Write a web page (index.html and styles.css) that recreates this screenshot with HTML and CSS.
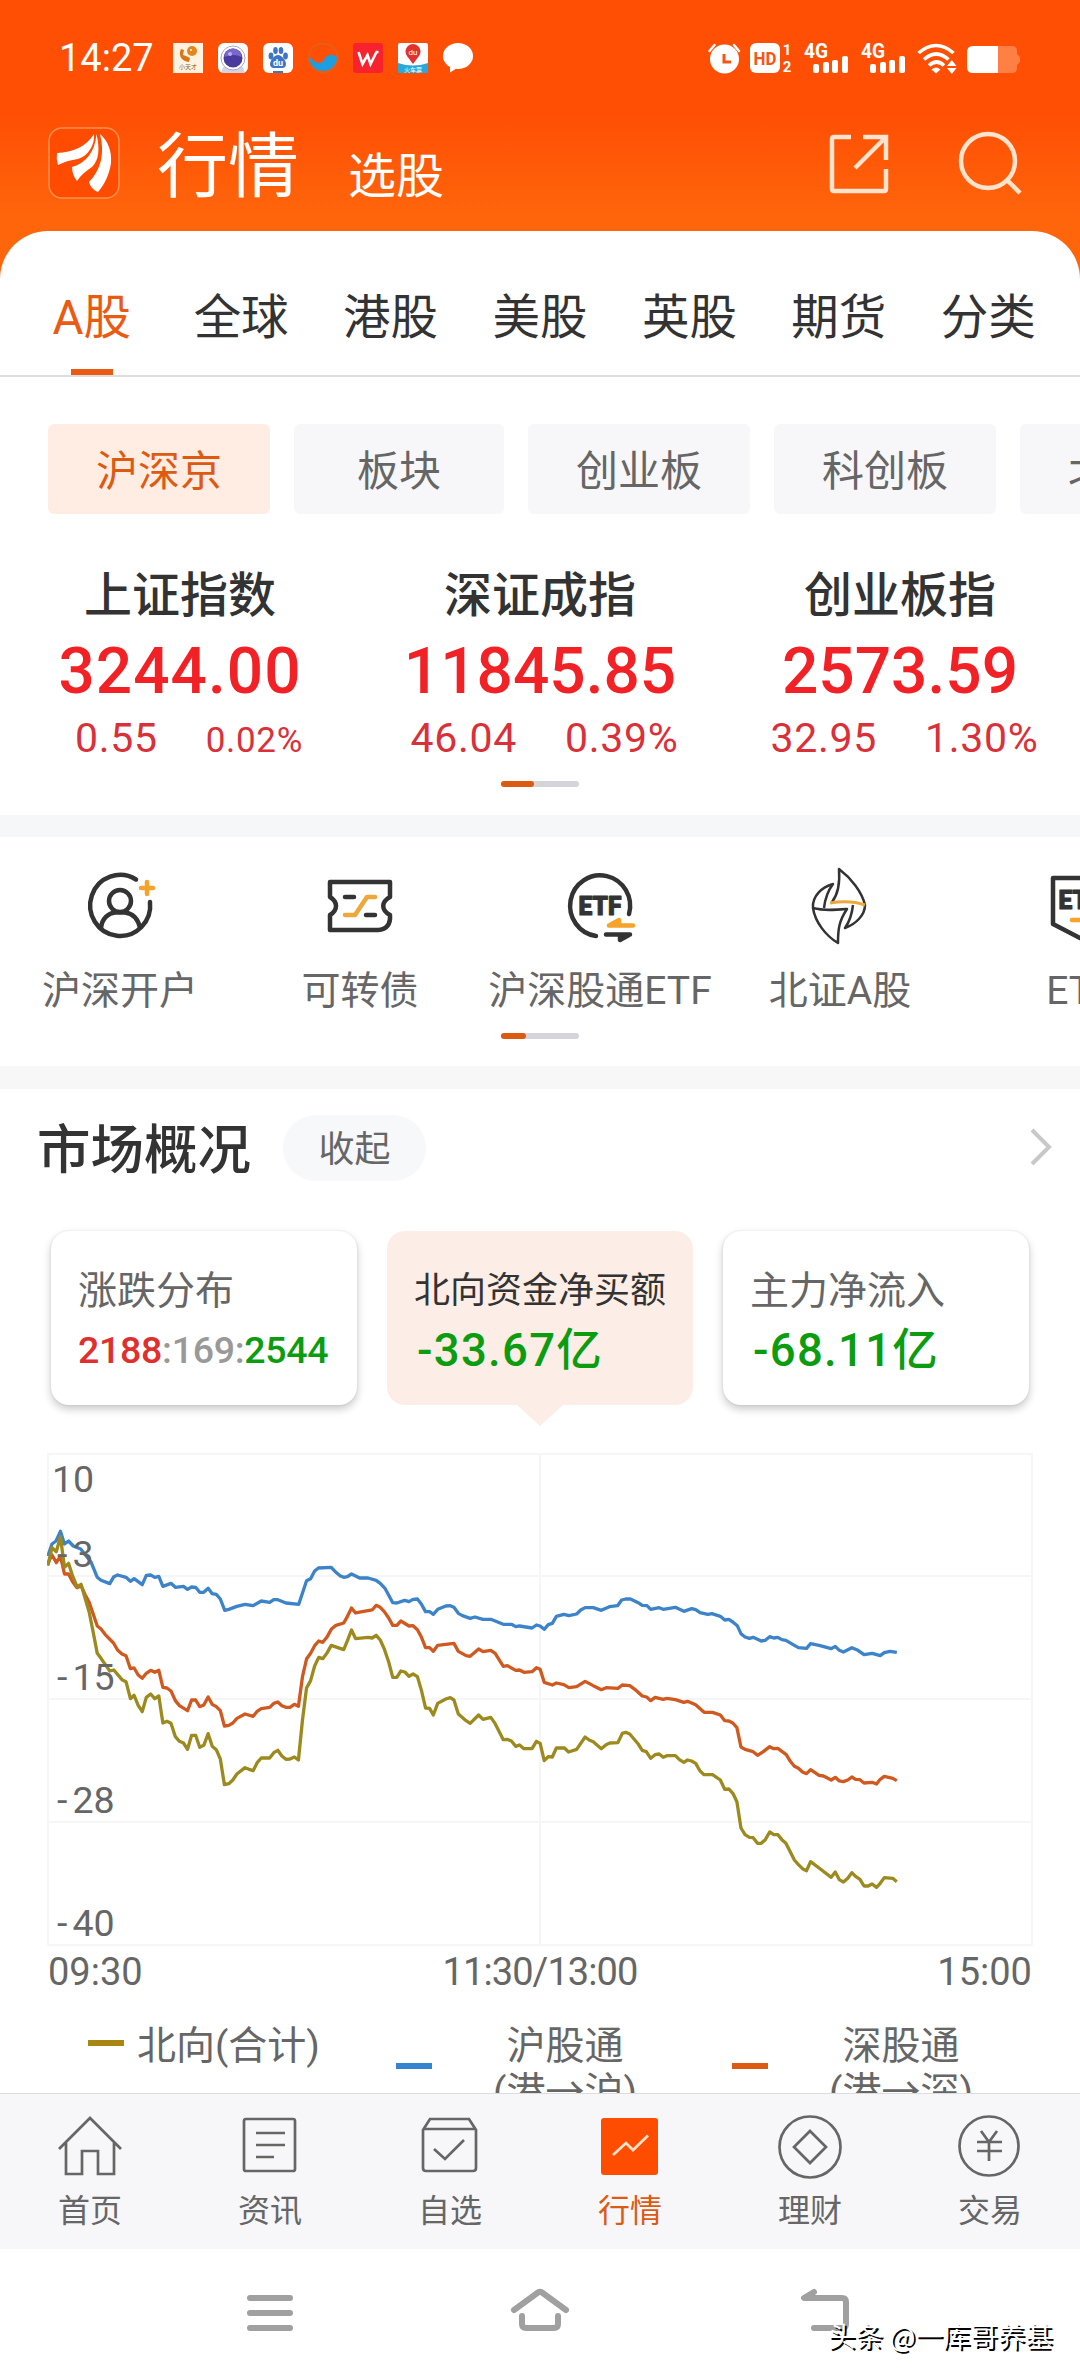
FILE: index.html
```html
<!DOCTYPE html>
<html lang="zh-CN">
<head>
  <meta charset="UTF-8">
  <title>行情</title>
  <link rel="stylesheet" href="styles.css">
</head>
<body>
<div class="phone">

  <div class="status">
    <span class="time">14:27</span>
    <div class="apps">
      <svg width="30" height="30" viewBox="0 0 30 30">
        <rect width="30" height="30" fill="#fdf3e0"/>
        <circle cx="19" cy="8" r="5" fill="#e8841c"/>
        <path d="M8 6c-3 6 0 12 8 13l1-4-4-2-3-1 1-5z" fill="#d9761a"/>
        <circle cx="18" cy="7" r="1" fill="#fff"/>
        <text x="15" y="26" font-size="6" text-anchor="middle" fill="#8a6a20">小天才</text>
      </svg>
      <svg width="30" height="30" viewBox="0 0 30 30">
        <rect width="30" height="30" rx="6" fill="#fff"/>
        <path d="M5 24h20l2 6H3z" fill="#d4d3e6"/>
        <circle cx="15" cy="15" r="12" fill="#fff" stroke="#aaa6c8"/>
        <circle cx="15" cy="15" r="9.5" fill="#4a3a9c"/>
        <path d="M6.500 14a8.500 8.500 0 0 1 17 0q-8-4-17 0z" fill="#7a68cc"/>
        <circle cx="12" cy="11" r="2" fill="#b9aef0"/>
      </svg>
      <svg width="30" height="30" viewBox="0 0 30 30">
        <rect width="30" height="30" rx="6" fill="#fff"/>
        <g fill="#3f75c4">
          <ellipse cx="8" cy="13" rx="2.400" ry="3.400"/>
          <ellipse cx="12.500" cy="7.500" rx="2.300" ry="3.500"/>
          <ellipse cx="18" cy="7.500" rx="2.300" ry="3.500"/>
          <ellipse cx="22.500" cy="13" rx="2.400" ry="3.400"/>
          <path d="M15 12c4 0 8 6 8 9s-2 4-4 4h-8c-3 0-4-2-4-4 0-3 4-9 8-9z"/>
          <rect x="10" y="28" width="10" height="2"/>
        </g>
        <text x="15" y="23" font-size="9" font-weight="700" text-anchor="middle" fill="#fff">du</text>
      </svg>
      <svg width="30" height="30" viewBox="0 0 30 30">
        <circle cx="15" cy="15" r="14.500" fill="none" stroke="#c9702f" stroke-width="1"/>
        <path d="M1 13c4 5 7 7 10 7 6 0 5-8 11-8 3 0 6 0 7 3a14 14 0 0 1-28-2z" fill="#1d9ee0"/>
      </svg>
      <svg width="30" height="30" viewBox="0 0 30 30">
        <rect width="30" height="30" rx="3" fill="#f8222e"/>
        <path d="M5.500 9l4 12 5-9 3 9 6-12h2" fill="none" stroke="#fff" stroke-width="2.600"/>
      </svg>
      <svg width="30" height="30" viewBox="0 0 30 30">
        <rect width="30" height="30" rx="2" fill="#fff"/>
        <path d="M0 20q15 5 30 0v10H0z" fill="#2aa9d8"/>
        <path d="M15 21l-6-8a7.500 7.500 0 1 1 12 0z" fill="#e2312f"/>
        <text x="15" y="12" font-size="8" text-anchor="middle" fill="#fff">du</text>
        <text x="15" y="28.500" font-size="6" text-anchor="middle" fill="#fff">火车票</text>
      </svg>
      <svg width="30" height="30" viewBox="0 0 30 30">
        <ellipse cx="15" cy="13" rx="15" ry="13" fill="#fff"/>
        <path d="M7 22v7.500l8-5z" fill="#fff"/>
      </svg>
    </div>
    <svg class="sys" width="314" height="48" viewBox="708 34 314 48" fill="#fff">
      <circle cx="724.500" cy="59" r="14.500"/>
      <path d="M709.500 51l5-6M739 51l-5-6" stroke="#fff" stroke-width="2.500" stroke-linecap="round"/>
      <path d="M724 54v8h7" fill="none" stroke="#f75512" stroke-width="3"/>
      <rect x="750" y="43" width="30" height="30" rx="6"/>
      <text x="765" y="65" font-size="19" font-weight="700" text-anchor="middle" fill="#f75512" textLength="23" lengthAdjust="spacingAndGlyphs">HD</text>
      <text x="787" y="55" font-size="15" font-weight="700" text-anchor="middle">1</text>
      <text x="787" y="72" font-size="15" font-weight="700" text-anchor="middle">2</text>
      <text x="804" y="58" font-size="20" font-weight="700" textLength="24" lengthAdjust="spacingAndGlyphs">4G</text>
      <g id="bars">
        <rect x="813" y="64" width="6" height="9" rx="2"/>
        <rect x="823" y="62" width="6" height="11" rx="2"/>
        <rect x="832" y="60" width="6" height="13" rx="2"/>
        <rect x="842" y="56" width="6" height="17" rx="2"/>
      </g>
      <text x="861" y="58" font-size="20" font-weight="700" textLength="24" lengthAdjust="spacingAndGlyphs">4G</text>
      <use href="#bars" x="57"/>
      <g fill="none" stroke="#fff" stroke-width="3.600">
        <path d="M918.500 53q17.500-15 35 0"/>
        <path d="M924 59.500q12-11 24.500 0"/>
        <path d="M929 65.500q7.500-7 15 0"/>
      </g>
      <path d="M931.500 69.500q4.500-4 9 0l-4.500 4zM947 66h9.500l-4.700-6zM947 68h9.500l-4.700 6z"/>
      <path d="M998 46h14q5 0 5 5v3l3 3v5l-3 3v3q0 5-5 5h-14z" fill="#ff7f45"/>
      <path d="M998 46v27h-25q-6 0-6-6v-15q0-6 6-6z"/>
    </svg>
  </div>

  <div class="header">
    <svg class="logo" width="72" height="72" viewBox="0 0 72 72">
      <rect x="1" y="1" width="70" height="70" rx="13" fill="#ff4c00" stroke="#ff9150" stroke-width="1.500"/>
      <path d="M9 26C25 25 38 20 46 7c1 11-6 22-16 25-8 1-14 3-20 6q-2-6-1-12zM24 40C38 36 47 25 48.500 7 52 22 51 33 44 40c-6 4-11 8-15 14-3-4-5-8-5-14zM52 7c8 7 12 17 11 29-2 13-7 22-13 29-5-2-8-6-9-10 12-12 16-29 11-48z" fill="#fff"/>
    </svg>
    <h1>行情</h1>
    <span class="pick">选股</span>
    <div class="actions">
      <svg width="60" height="62" viewBox="0 0 60 62" fill="none" stroke="#ffe3cd" stroke-width="4.500">
        <path d="M22 5H5q-2 0-2 2v50q0 2 2 2h50q2 0 2-2V37"/>
        <path d="M34 5h23v23M56 6L26 36"/>
      </svg>
      <svg width="64" height="64" viewBox="0 0 64 64" fill="none" stroke="#ffe3cd" stroke-width="4.500">
        <circle cx="30" cy="30" r="27"/>
        <path d="M49 49l13 13"/>
      </svg>
    </div>
  </div>

  <div class="main">
    <div class="tabs">
      <span class="on">A股</span><span>全球</span><span>港股</span><span>美股</span><span>英股</span><span>期货</span><span>分类</span>
    </div>

    <div class="chips">
      <span class="chip on">沪深京</span>
      <span class="chip short">板块</span>
      <span class="chip">创业板</span>
      <span class="chip">科创板</span>
      <span class="chip">北证京</span>
    </div>

    <div class="indices">
      <div class="index first">
        <div class="name">上证指数</div>
        <div class="value">3244.00</div>
        <div class="change"><span>0.55</span><span class="small">0.02%</span></div>
      </div>
      <div class="index">
        <div class="name">深证成指</div>
        <div class="value">11845.85</div>
        <div class="change"><span>46.04</span><span>0.39%</span></div>
      </div>
      <div class="index">
        <div class="name">创业板指</div>
        <div class="value">2573.59</div>
        <div class="change"><span>32.95</span><span>1.30%</span></div>
      </div>
    </div>
    <div class="pager"><i></i></div>

    <div class="quick">
      <div class="item">
        <svg width="80" height="80" viewBox="0 0 80 80" fill="none" stroke="#333" stroke-width="4.500" stroke-linecap="round">
          <path d="M56 13.500A30 30.500 0 1 0 70 36"/>
          <circle cx="40" cy="35" r="11"/>
          <path d="M21 62c1-10 8-15 14-15.500h10c8 1 13 7 15 15"/>
          <path d="M67 16v12M61 22h12" stroke="#f5a32a" stroke-width="4.500"/>
        </svg>
        <span>沪深开户</span>
      </div>
      <div class="item">
        <svg width="80" height="80" viewBox="0 0 80 80" fill="none" stroke="#333" stroke-width="4.500" stroke-linecap="round" stroke-linejoin="round">
          <path d="M10 16h60v15c-9 5-9 13 0 18q1 14-12 15H10V49c8-5 8-13 0-18z"/>
          <path d="M25 31h9M46 49h9"/>
          <path d="M25 49h10L47 31h8" stroke="#eda73a"/>
        </svg>
        <span>可转债</span>
      </div>
      <div class="item">
        <svg width="80" height="80" viewBox="0 0 80 80" fill="none" stroke="#333" stroke-width="4.500" stroke-linecap="round" stroke-linejoin="round">
          <path d="M36 70A30 30.500 0 1 1 69 48"/>
          <text x="40" y="49" font-size="26" font-weight="900" text-anchor="middle" textLength="43" lengthAdjust="spacingAndGlyphs" fill="#333" stroke="#333" stroke-width="1">ETF</text>
          <path d="M49 59.500h24M50 59l9-5v4" stroke="#f5a32a"/>
          <path d="M46 68.500h24M69 69l-9 5v-4"/>
        </svg>
        <span>沪深股通ETF</span>
      </div>
      <div class="item">
        <svg width="80" height="80" viewBox="0 0 80 80" fill="none" stroke="#333" stroke-width="2.500" stroke-linejoin="round">
          <path d="M32 36c7-9 8-20 7-33 12 9 23 23 26 36 0 10-9 19-20 23 5-7 7-14 8-23"/>
          <path d="M13 42c-1-12 9-21 20-24-6 8-8 15-9 24M13 42c11 3 22 2 34 1-8 12-9 20-9 34-12-7-23-21-25-35z"/>
          <path d="M30 37c12-2 24-2 35 2" stroke="#eda73a" stroke-width="3"/>
        </svg>
        <span>北证A股</span>
      </div>
      <div class="item">
        <svg width="80" height="80" viewBox="0 0 80 80" fill="none" stroke="#333" stroke-width="4.500" stroke-linecap="round" stroke-linejoin="round">
          <path d="M13 12h54v46L40 72 13 58z"/>
          <text x="40" y="43" font-size="26" font-weight="900" text-anchor="middle" textLength="43" lengthAdjust="spacingAndGlyphs" fill="#333" stroke="#333" stroke-width="1">ETF</text>
          <path d="M32 54h16" stroke="#f5a32a"/>
        </svg>
        <span>ETF</span>
      </div>
    </div>
    <div class="pager second"><i></i></div>

    <div class="market">
      <div class="market-head">
        <h2>市场概况</h2>
        <span class="fold">收起</span>
        <svg width="24" height="40" viewBox="0 0 24 40" fill="none" stroke="#c8c8c8" stroke-width="4"><path d="M4 2l17 17L4 36"/></svg>
      </div>

      <div class="cards">
        <div class="card">
          <div class="label">涨跌分布</div>
          <div class="ratio"><b class="up">2188</b><b class="flat">:169:</b><b class="down">2544</b></div>
        </div>
        <div class="card on">
          <div class="label">北向资金净买额</div>
          <div class="amount">-33.67亿</div>
        </div>
        <div class="card">
          <div class="label">主力净流入</div>
          <div class="amount">-68.11亿</div>
        </div>
      </div>

      <svg class="chart" width="986" height="494" viewBox="0 0 986 494">
        <path class="grid" d="M1 1h984v491H1zM1 123h984M1 246h984M1 369h984M493 1v491"/>
        <g class="lines" transform="translate(-17 -13) scale(.33807 .33333)">
          <polyline stroke="#3d83c9" points="53,348 65,312 77,303 90,274 102,312 114,303 128,318 150,327 164,345 180,365 199,412 210,421 236,431 248,410 259,405 284,412 297,424 308,416 332,434 344,406 357,405 369,412 381,409 393,439 417,430 430,442 454,439 466,448 478,441 490,442 502,457 514,457 527,445 539,461 551,463 563,477 576,511 588,508 612,499 636,493 660,497 684,483 709,487 721,479 733,479 757,489 795,493 818,422 830,416 842,393 853,384 891,382 905,397 917,407 928,412 939,410 951,402 975,414 1000,414 1024,421 1036,430 1050,445 1073,488 1085,489 1108,481 1121,485 1133,478 1146,477 1158,493 1170,515 1182,515 1193,523 1206,508 1230,498 1243,497 1254,502 1267,520 1279,527 1302,535 1316,531 1340,538 1363,538 1400,553 1424,553 1437,560 1448,558 1485,564 1498,555 1509,558 1521,568 1533,554 1545,550 1557,529 1579,523 1594,527 1617,522 1629,510 1642,503 1666,503 1690,511 1714,500 1738,497 1750,480 1762,477 1776,477 1799,488 1811,496 1825,497 1836,508 1861,503 1873,508 1909,502 1934,514 1957,506 1969,509 1982,518 2005,523 2017,521 2042,529 2055,540 2067,538 2079,546 2092,557 2103,581 2115,591 2128,595 2139,592 2163,603 2175,601 2188,590 2200,594 2212,592 2224,599 2236,601 2261,616 2273,623 2297,625 2309,611 2334,616 2370,626 2382,619 2394,631 2406,636 2431,623 2449,631 2467,644 2491,640 2515,647 2527,638 2544,634 2564,637"/>
          <polyline stroke="#d0591f" points="53,370 65,345 78,368 90,348 102,402 114,402 126,425 139,443 151,437 163,464 175,487 199,558 210,567 222,583 247,609 259,630 272,642 284,647 297,686 308,684 320,705 332,715 344,700 357,691 369,697 381,691 393,742 405,744 417,753 430,782 442,797 466,812 478,780 490,780 502,800 514,795 527,771 539,793 551,800 563,812 575,858 588,856 600,849 612,835 636,822 660,829 672,814 684,806 709,802 721,790 733,786 745,797 757,802 769,802 782,793 794,799 806,710 818,657 830,640 842,617 854,603 866,607 878,592 891,568 905,556 928,549 939,529 951,504 963,519 1012,510 1024,496 1036,502 1048,515 1061,534 1073,556 1085,556 1097,543 1121,558 1133,557 1146,569 1158,592 1170,623 1182,623 1193,634 1206,616 1254,610 1267,634 1290,647 1302,649 1327,627 1340,635 1363,631 1376,640 1400,679 1412,677 1437,691 1448,690 1461,697 1485,695 1498,683 1509,688 1521,727 1545,735 1557,729 1579,734 1594,743 1617,740 1642,724 1666,737 1690,749 1704,743 1739,745 1752,735 1774,737 1789,748 1811,768 1824,771 1836,782 1849,772 1873,778 1884,775 1909,779 1934,787 1945,784 1969,794 1994,817 2019,817 2042,825 2055,842 2067,843 2079,849 2091,863 2103,921 2115,928 2139,935 2152,946 2169,935 2188,920 2200,926 2212,925 2237,944 2249,964 2261,979 2273,985 2285,996 2297,1001 2309,989 2334,1006 2347,1008 2370,1020 2382,1012 2394,1023 2406,1025 2419,1020 2431,1011 2442,1018 2455,1019 2467,1029 2491,1027 2504,1032 2515,1018 2527,1009 2552,1015 2564,1022"/>
          <polyline stroke="#9c8a1f" points="53,377 65,323 78,335 90,290 102,382 114,370 126,408 139,440 151,433 163,475 175,516 187,577 199,640 210,655 236,693 248,690 272,719 284,725 297,776 308,766 320,796 332,815 344,772 357,762 369,776 381,768 393,849 405,844 417,850 430,890 442,904 454,909 466,928 478,886 490,886 502,922 514,916 527,881 539,919 551,929 563,957 575,1034 588,1031 600,1020 612,1002 636,983 648,988 660,992 672,968 684,954 709,954 721,938 733,931 745,948 757,958 769,957 782,951 794,960 806,840 818,744 830,722 842,678 854,652 866,656 878,640 891,616 928,629 939,602 951,570 963,596 1000,592 1012,594 1024,586 1036,600 1048,627 1061,666 1073,712 1085,712 1097,693 1109,696 1121,709 1133,702 1146,710 1158,752 1170,804 1182,805 1193,825 1206,790 1230,777 1243,773 1254,780 1267,822 1290,842 1302,850 1327,825 1340,838 1363,832 1376,851 1400,899 1412,898 1424,903 1437,919 1448,915 1461,926 1485,926 1498,904 1509,910 1521,962 1533,950 1545,951 1557,924 1581,924 1593,936 1617,928 1642,891 1654,900 1666,905 1690,926 1704,914 1715,909 1739,908 1752,880 1762,877 1774,882 1799,912 1811,931 1823,935 1836,955 1849,944 1861,942 1873,952 1884,947 1909,947 1921,959 1934,967 1945,960 1957,963 1969,970 1982,993 1994,1004 2019,1004 2042,1020 2055,1048 2067,1047 2079,1060 2091,1085 2103,1164 2115,1184 2128,1192 2139,1193 2152,1210 2163,1210 2175,1199 2188,1176 2200,1184 2212,1184 2224,1199 2236,1210 2261,1260 2273,1274 2285,1286 2297,1292 2309,1265 2334,1284 2370,1312 2382,1296 2394,1319 2406,1326 2419,1315 2431,1298 2442,1309 2455,1318 2467,1338 2479,1338 2491,1332 2504,1342 2515,1330 2527,1313 2552,1315 2564,1325"/>
        </g>
        <text x="5" y="39">10</text>
        <text x="10" y="114">-<tspan dx="5">3</tspan></text>
        <text x="10" y="237">-<tspan dx="5">15</tspan></text>
        <text x="10" y="360">-<tspan dx="5">28</tspan></text>
        <text x="10" y="483">-<tspan dx="5">40</tspan></text>
      </svg>
      <div class="axis"><span>09:30</span><span class="mid">11:30/13:00</span><span>15:00</span></div>

      <div class="legend">
        <div class="total"><i></i>北向(合计)</div>
        <div class="sh"><i></i><span>沪股通<br>(港→沪)</span></div>
        <div class="sz"><i></i><span>深股通<br>(港→深)</span></div>
      </div>
    </div>
  </div>

  <div class="tabbar">
    <div>
      <svg width="68" height="68" viewBox="0 0 68 68"><path d="M3 36L34 5l31 31M10 30v31h16V38h16v23h16V30"/></svg>
      首页
    </div>
    <div>
      <svg width="68" height="68" viewBox="0 0 68 68"><rect x="8" y="6" width="51" height="52" rx="2"/><path d="M20 20h29M20 32h29M20 44h18"/></svg>
      资讯
    </div>
    <div>
      <svg width="68" height="68" viewBox="0 0 68 68"><path d="M7 17l7-11h39l7 11v38q0 3-3 3H10q-3 0-3-3zM7 16h53M18 36l11 10 19-19"/></svg>
      自选
    </div>
    <div class="on">
      <svg width="68" height="68" viewBox="0 0 68 68"><rect x="5" y="5" width="57" height="57" rx="3" fill="#ff4d00" stroke="none"/><path d="M17 42l13-12 7 7 15-14.500" stroke="#ffe3cd"/></svg>
      行情
    </div>
    <div>
      <svg width="68" height="68" viewBox="0 0 68 68"><circle cx="34" cy="34" r="30.500"/><path d="M34 18l16 16-16 16-16-16z"/></svg>
      理财
    </div>
    <div>
      <svg width="68" height="68" viewBox="0 0 68 68"><circle cx="33" cy="33" r="29.500"/><path d="M25 18l8 11 8-11M21 29h25M21 38h25M33 29v19"/></svg>
      交易
    </div>
  </div>

  <div class="sysnav">
    <svg width="60" height="52" viewBox="0 0 60 52"><path d="M10 13h40M10 28h40M10 43h40"/></svg>
    <svg width="60" height="52" viewBox="0 0 60 52"><path d="M4 25L28 7.500q2-1.500 4 0L56 25M12 31v8q0 4 4 4h28q4 0 4-4v-8"/></svg>
    <svg width="80" height="52" viewBox="0 0 80 52"><path d="M34 7l-10 6h38q4 0 4 4v22q0 4-4 4H34"/></svg>
    <span class="watermark">头条 @一库哥养基</span>
  </div>
</div>
</body>
</html>
```

FILE: styles.css
```css
* { box-sizing: border-box; }

body {
  margin: 0;
  font-family: Roboto, "Noto Sans CJK SC", sans-serif;
  color: #333;
}

svg { display: block; flex-shrink: 0; }
i { font-style: normal; }

.phone {
  width: 1080px;
  height: 2376px;
  display: flex;
  flex-direction: column;
  overflow: hidden;
  background: linear-gradient(#ff4f04 0, #ff4f04 115px, #ff660c 220px);
}

/* status bar */
.status {
  display: flex;
  align-items: center;
  height: 116px;
  padding-left: 59px;
  color: #fff;
}

.time {
  width: 114px;
  font-size: 38px;
}

.apps { display: flex; gap: 15px; }
.sys { margin-left: 235px; }

/* title row */
.header {
  display: flex;
  align-items: center;
  height: 115px;
  padding: 0 58px 21px 48px;
  color: #fff;
}

.header h1 {
  margin: 7px 0 0 37px;
  font-size: 71px;
  font-weight: 400;
  line-height: 80px;
}

.pick {
  margin: 28px 0 0 49px;
  font-size: 48px;
  line-height: 56px;
}

.actions {
  display: flex;
  align-items: center;
  gap: 69px;
  margin-left: auto;
}

.main {
  flex: 1;
  min-height: 0;
  overflow: hidden;
  background: #fff;
  border-radius: 48px 48px 0 0;
}

.tabs {
  display: grid;
  grid-template-columns: repeat(7, 1fr);
  height: 146px;
  padding: 0 17px;
  border-bottom: 2px solid #dedede;
  font-size: 47.500px;
  line-height: 174px;
  text-align: center;
}

.tabs span { height: 144px; }

.tabs .on {
  color: #ea5a12;
  background: linear-gradient(#ea5a12, #ea5a12) center bottom / 42px 6px no-repeat;
}

.chips {
  display: flex;
  gap: 24px;
  margin-top: 47px;
  padding-left: 48px;
}

.chip {
  flex: none;
  width: 222px;
  height: 90px;
  border-radius: 6px;
  background: #f7f7f9;
  color: #666;
  font-size: 42px;
  line-height: 95px;
  text-align: center;
}

.chip.short { width: 210px; }
.chip.on { background: #ffede3; color: #dd5a12; }

/* indices */
.indices {
  display: grid;
  grid-template-columns: repeat(3, 1fr);
  padding-top: 52px;
  text-align: center;
}

.name {
  font-size: 48px;
  font-weight: 500;
  line-height: 60px;
}

.value {
  margin-top: 13px;
  font-size: 64px;
  font-weight: 500;
  line-height: 66px;
  color: #f12126;
}

.first .value { letter-spacing: 1px; }

.change {
  display: flex;
  justify-content: center;
  align-items: baseline;
  gap: 48px;
  height: 48px;
  margin-top: 9px;
  padding-left: 9px;
  font-size: 41px;
  line-height: 48px;
  letter-spacing: .7px;
  color: #d9303a;
}

.first .change { padding-left: 18px; }
.change .small { font-size: 35px; }

.pager {
  width: 78px;
  height: 6px;
  margin: 19px auto 28px;
  border-radius: 3px;
  background: #d4d4da;
}

.pager i {
  display: block;
  width: 33px;
  height: 6px;
  border-radius: 3px;
  background: #dd5a12;
}

.pager.second { margin-bottom: 27px; }
.pager.second i { width: 25px; }

/* shortcuts */
.quick {
  display: flex;
  padding-top: 29px;
  border-top: 22px solid #f6f7f9;
}

.item {
  flex: 0 0 240px;
  display: flex;
  flex-direction: column;
  align-items: center;
  gap: 21px;
  margin-bottom: -1px;
  font-size: 39px;
  line-height: 48px;
  white-space: nowrap;
  color: #666;
}

/* market overview */
.market {
  border-top: 23px solid #f7f7f8;
  padding: 26px 0 0;
}

.market-head {
  display: flex;
  align-items: center;
  height: 66px;
  padding: 0 28px 0 37px;
}

.market-head h2 {
  margin: 5px 32px 0 0;
  font-size: 53.500px;
  font-weight: 500;
  line-height: 66px;
}

.market-head svg { margin-left: auto; }

.fold {
  width: 143px;
  height: 66px;
  border-radius: 33px;
  background: #f7f8fa;
  color: #666;
  font-size: 36px;
  line-height: 70px;
  text-align: center;
}

.cards {
  display: grid;
  grid-template-columns: repeat(3, 306px);
  gap: 30px;
  margin: 50px 0 0 51px;
}

.card {
  position: relative;
  height: 174px;
  padding: 35px 0 0 27px;
  border-radius: 18px;
  background: #fff;
  box-shadow: 0 4px 8px rgba(0, 0, 0, .22), 0 0 2px rgba(0, 0, 0, .1);
  white-space: nowrap;
}

.card.on {
  background: #fceee6;
  box-shadow: none;
}

.card.on::after {
  content: "";
  position: absolute;
  left: 129px;
  top: 173px;
  border: 24px solid transparent;
  border-top: 22px solid #fceee6;
  border-bottom: 0;
}

.label {
  font-size: 39px;
  line-height: 50px;
  color: #666;
}

.on .label { font-size: 36px; color: #333; }

.ratio {
  margin-top: 9px;
  font-size: 37.500px;
  line-height: 50px;
  letter-spacing: -.3px;
}

.ratio b { font-weight: 500; }
.up { color: #e0302e; }
.flat { color: #999; }
.down { color: #0c9c10; }

.amount {
  margin-top: 10px;
  padding-left: 3px;
  font-size: 45.500px;
  font-weight: 500;
  line-height: 50px;
  letter-spacing: 1.300px;
  color: #0c9c10;
}

.chart { margin: 48px 0 0 47px; }

.chart text { font-size: 37.500px; fill: #666; }
.grid { fill: none; stroke: #f6f6f6; stroke-width: 2; }

.lines polyline {
  fill: none;
  stroke-width: 3.300;
  stroke-linejoin: round;
  vector-effect: non-scaling-stroke;
}

.axis {
  display: flex;
  justify-content: space-between;
  margin: 5px 48px 0;
  font-size: 38px;
  line-height: 40px;
  color: #666;
}

.axis .mid { letter-spacing: -.9px; }

.legend {
  display: grid;
  grid-template-columns: 308px 336px 336px;
  margin: 31px 0 0 88px;
  font-size: 39px;
  line-height: 46px;
  color: #666;
}

.legend div { display: flex; height: 92px; }

.legend i {
  width: 36px;
  height: 6px;
  margin: 40px 0 0;
  background: #a88612;
}

.legend .total i { margin: 17px 13px 0 0; }
.sh span, .sz span { width: 266px; text-align: center; }
.sh i { background: #3584d0; }
.sz i { background: #dd5a12; }

/* bottom tabs */
.tabbar {
  display: grid;
  grid-template-columns: repeat(6, 1fr);
  height: 156px;
  border-top: 1px solid #dcdcdc;
  background: #f7f7f9;
  color: #666;
  font-size: 32px;
  line-height: 40px;
}

.tabbar div {
  display: flex;
  flex-direction: column;
  align-items: center;
  gap: 10px;
  padding-top: 19px;
}

.tabbar .on { color: #dd5a12; }

.tabbar svg, .sysnav svg {
  fill: none;
  stroke: #666;
  stroke-width: 2.700;
}

.sysnav {
  position: relative;
  display: flex;
  gap: 210px;
  height: 127px;
  padding: 36px 0 0 240px;
  background: #fff;
}

.sysnav svg {
  stroke: #a0a0a0;
  stroke-width: 6;
  stroke-linecap: round;
  stroke-linejoin: round;
}

.watermark {
  position: absolute;
  left: 828px;
  top: 68px;
  font-family: "Noto Sans CJK SC", sans-serif;
  font-size: 27.500px;
  line-height: 36px;
  white-space: nowrap;
  color: #fff;
  text-shadow: 2px 2px 0 #000;
}
```
